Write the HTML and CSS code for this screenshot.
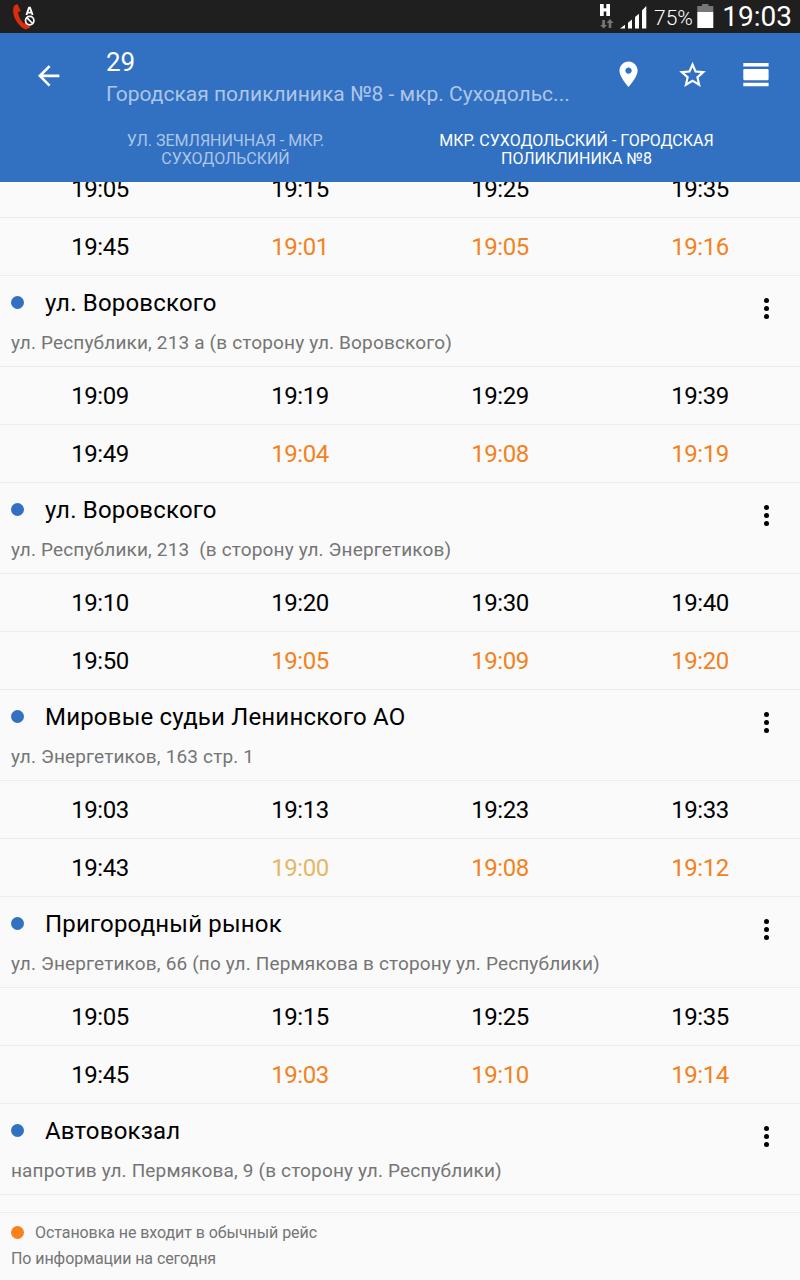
FILE: index.html
```html
<!DOCTYPE html>
<html lang="ru">
<head>
    <meta charset="UTF-8">
    <title>29</title>
    <meta name="viewport" content="width=device-width, initial-scale=1">
    <link rel="stylesheet" href="styles.css">
</head>
<body>
<div class="screen">
    <!--Status bar-->
    <div class="status">
	<svg class="call" width="24" height="28" viewBox="0 0 24 28">
	    <path d="M5.500 1L2 2.800C-1 10 4 22 13.500 26.500L18.500 24.500L15 19L12 20.500C8 17 6.500 13 6 9.300L8.700 8Z" fill="#dc2c10"/>
	    <path d="M14.400 12L17 4.800h1L20.600 12M15.500 9.600h4" fill="none" stroke="#fff" stroke-width="1.900"/>
	    <circle cx="17.700" cy="17.600" r="4.200" fill="#1f1f1f" stroke="#fff" stroke-width="1.700"/>
	    <path d="M14.800 14.700l5.800 5.800" stroke="#fff" stroke-width="1.700"/>
	</svg>
	<svg class="data" width="14" height="26" viewBox="0 0 14 26">
	    <path d="M0 0h3.700v4.300h2.600V0H10v12H6.300V7.500H3.700V12H0z" fill="#fff"/>
	    <path d="M2.300 16h2.600v5h2.100L3.600 24.500.2 21h2.100zM8.700 24h2.600v-5h2.100L10 15l-3.400 4h2.100z" fill="#777"/>
	</svg>
	<svg class="signal" width="28" height="24" viewBox="0 0 28 24">
	    <path d="M0 23.500l5-3.700v3.700zM8 17.800l4-3.300v9H8zM15 12l4-3.300v14.800h-4zM22 5.500l4.300-4.500v22.500H22z" fill="#fff"/>
	</svg>
	<span class="percent">75%</span>
	<svg class="battery" width="17" height="24" viewBox="0 0 17 24">
	    <path d="M5 0h6.500v2h4.800v6H.3V2H5z" fill="#777"/>
	    <path d="M.3 8h16v16H.3z" fill="#fff"/>
	</svg>
	<span class="clock">19:03</span>
    </div>
    <!--Toolbar-->
    <div class="header">
	<div class="toolbar">
	    <svg class="back" width="32" height="32" viewBox="0 0 24 24">
		<path d="M20.500 10.900H8.330l5.590-5.590L12.500 3.900l-8 8 8 8 1.410-1.410L8.330 12.900H20.500v-2z" fill="#fff"/>
	    </svg>
	    <div class="titles">
		<div class="route">29</div>
		<div class="subtitle">Городская поликлиника №8 - мкр. Суходольс...</div>
	    </div>
	    <div class="actions">
		<svg width="32" height="32" viewBox="0 0 24 24">
		    <path d="M12.400 1.900C8.730 1.900 5.600 4.900 5.600 8.700c0 5.100 6.800 12.400 6.800 12.400s6.800-7.300 6.800-12.400c0-3.800-3.130-6.800-6.800-6.800zm0 9.200c-1.380 0-2.400-1.120-2.400-2.400s1.120-2.400 2.400-2.400 2.400 1.120 2.400 2.400-1.120 2.400-2.400 2.400z" fill="#fff"/>
		</svg>
		<svg width="32" height="32" viewBox="-.4 0 24 24">
		    <path d="M22 9.240l-7.190-.62L12 2 9.190 8.630 2 9.240l5.460 4.730L5.820 21 12 17.270 18.180 21l-1.630-7.030L22 9.240zM12 15.400l-3.760 2.270 1-4.280-3.320-2.880 4.380-.38L12 6.100l1.710 4.040 4.380.38-3.320 2.880 1 4.280L12 15.400z" fill="#fff"/>
		</svg>
		<svg width="32" height="32" viewBox="0 0 32 32">
		    <path d="M3.300 4h25.300v3.600H3.300zM3.300 23.700h25.300v3.600H3.300z" fill="#fff"/>
		    <rect x="3.300" y="10" width="25.300" height="11.300" rx="1.300" fill="#fff"/>
		</svg>
	    </div>
	</div>
	<div class="tabs">
	    <div class="tab">УЛ. ЗЕМЛЯНИЧНАЯ - МКР.<br>СУХОДОЛЬСКИЙ</div>
	    <div class="tab active">МКР. СУХОДОЛЬСКИЙ - ГОРОДСКАЯ<br>ПОЛИКЛИНИКА №8</div>
	</div>
    </div>
    <!--Stops-->
    <div class="list">
	<div class="times cut"><span>19:05</span><span>19:15</span><span>19:25</span><span>19:35</span></div>
	<div class="times"><span>19:45</span><span class="extra">19:01</span><span class="extra">19:05</span><span class="extra">19:16</span></div>

	<div class="stop">
	    <div class="name"><i class="dot"></i>ул. Воровского</div>
	    <div class="address">ул. Республики, 213 а (в сторону ул. Воровского)</div>
	    <div class="more"><i></i><i></i><i></i></div>
	</div>
	<div class="times"><span>19:09</span><span>19:19</span><span>19:29</span><span>19:39</span></div>
	<div class="times"><span>19:49</span><span class="extra">19:04</span><span class="extra">19:08</span><span class="extra">19:19</span></div>

	<div class="stop">
	    <div class="name"><i class="dot"></i>ул. Воровского</div>
	    <div class="address">ул. Республики, 213&nbsp; (в сторону ул. Энергетиков)</div>
	    <div class="more"><i></i><i></i><i></i></div>
	</div>
	<div class="times"><span>19:10</span><span>19:20</span><span>19:30</span><span>19:40</span></div>
	<div class="times"><span>19:50</span><span class="extra">19:05</span><span class="extra">19:09</span><span class="extra">19:20</span></div>

	<div class="stop">
	    <div class="name"><i class="dot"></i>Мировые судьи Ленинского АО</div>
	    <div class="address">ул. Энергетиков, 163 стр. 1</div>
	    <div class="more"><i></i><i></i><i></i></div>
	</div>
	<div class="times"><span>19:03</span><span>19:13</span><span>19:23</span><span>19:33</span></div>
	<div class="times"><span>19:43</span><span class="extra past">19:00</span><span class="extra">19:08</span><span class="extra">19:12</span></div>

	<div class="stop">
	    <div class="name"><i class="dot"></i>Пригородный рынок</div>
	    <div class="address">ул. Энергетиков, 66 (по ул. Пермякова в сторону ул. Республики)</div>
	    <div class="more"><i></i><i></i><i></i></div>
	</div>
	<div class="times"><span>19:05</span><span>19:15</span><span>19:25</span><span>19:35</span></div>
	<div class="times"><span>19:45</span><span class="extra">19:03</span><span class="extra">19:10</span><span class="extra">19:14</span></div>

	<div class="stop">
	    <div class="name"><i class="dot"></i>Автовокзал</div>
	    <div class="address">напротив ул. Пермякова, 9 (в сторону ул. Республики)</div>
	    <div class="more"><i></i><i></i><i></i></div>
	</div>
    </div>
    <!--Legend-->
    <div class="legend">
	<div class="note"><i class="dot orange"></i>Остановка не входит в обычный рейс</div>
	<div class="note">По информации на сегодня</div>
    </div>
</div>
</body>
</html>
```
FILE: styles.css
```css
*{
    box-sizing: border-box;
}
body{
    margin: 0;
    background: #fafafa;
    font-family: Roboto, "Noto Sans", sans-serif;
    color: #000;
}
svg{
    display: block;
    flex: none;
}
.screen{
    display: flex;
    flex-direction: column;
    width: 800px;
    height: 1280px;
    overflow: hidden;
}

/* status bar */
.status{
    display: flex;
    align-items: flex-start;
    flex: none;
    height: 33px;
    padding: 0 8px 0 12px;
    background: #1f1f1f;
    color: #fff;
}
.call{
    margin-top: 3px;
}
.data{
    margin: 4px 6px 0 auto;
}
.signal{
    margin-top: 5px;
}
.percent{
    width: 43px;
    margin-left: 6px;
    font-size: 21px;
    line-height: 36px;
    font-weight: 300;
    white-space: nowrap;
}
.battery{
    margin-top: 4px;
}
.clock{
    width: 71px;
    margin-left: 7px;
    font-size: 28px;
    line-height: 33px;
    white-space: nowrap;
    text-align: right;
}

/* toolbar and tabs */
.header{
    flex: none;
    height: 149px;
    background: #3270c2;
    color: #fff;
}
.toolbar{
    display: flex;
    align-items: flex-start;
    height: 93px;
    padding: 0 28px 0 32px;
}
.back{
    margin-top: 27px;
}
.titles{
    flex: 1;
    margin-left: 42px;
    padding-top: 12px;
}
.route{
    font-size: 26px;
    line-height: 34px;
}
.subtitle{
    font-size: 21px;
    line-height: 30px;
    color: #adc6e7;
    white-space: nowrap;
}
.actions{
    display: flex;
    gap: 32px;
    padding-top: 26px;
}
.tabs{
    display: flex;
    padding: 6px 48px 0 50px;
}
.tab{
    flex: 1;
    font-size: 16px;
    line-height: 18px;
    text-align: center;
    color: #adc6e7;
    white-space: nowrap;
}
.tab.active{
    color: #fff;
}

/* timetable */
.list{
    flex: none;
    height: 1030px;
    overflow: hidden;
}
.times{
    display: grid;
    grid-template-columns: repeat(4, 1fr);
    height: 58px;
    border-bottom: 1px solid #ededed;
    font-size: 24px;
    line-height: 58px;
    letter-spacing: -.5px;
    text-align: center;
}
.times.cut{
    margin-top: -22px;
}
.extra{
    color: #f48120;
}
.past{
    color: #e5b765;
}
.stop{
    position: relative;
    height: 91px;
    padding: 9px 11px 0;
    border-bottom: 1px solid #ededed;
}
.name{
    display: flex;
    align-items: center;
    font-size: 24px;
    line-height: 36px;
    letter-spacing: .19px;
}
.dot{
    flex: none;
    width: 13px;
    height: 13px;
    margin: 0 21px 2px 0;
    border-radius: 50%;
    background: #3270c2;
}
.address{
    margin-top: 10px;
    font-size: 19px;
    line-height: 24px;
    letter-spacing: .16px;
    color: #757575;
    white-space: nowrap;
}
.more{
    position: absolute;
    top: 22px;
    right: 31px;
    display: grid;
    gap: 3px;
}
.more i{
    width: 5px;
    height: 5px;
    border-radius: 50%;
    background: #000;
}

/* legend */
.legend{
    flex: 1;
    padding: 7px 11px;
    border-top: 1px solid #ededed;
}
.note{
    display: flex;
    align-items: center;
    font-size: 16px;
    line-height: 26px;
    letter-spacing: -.07px;
    color: #757575;
}
.dot.orange{
    margin-right: 11px;
    background: #f8821b;
}
```
